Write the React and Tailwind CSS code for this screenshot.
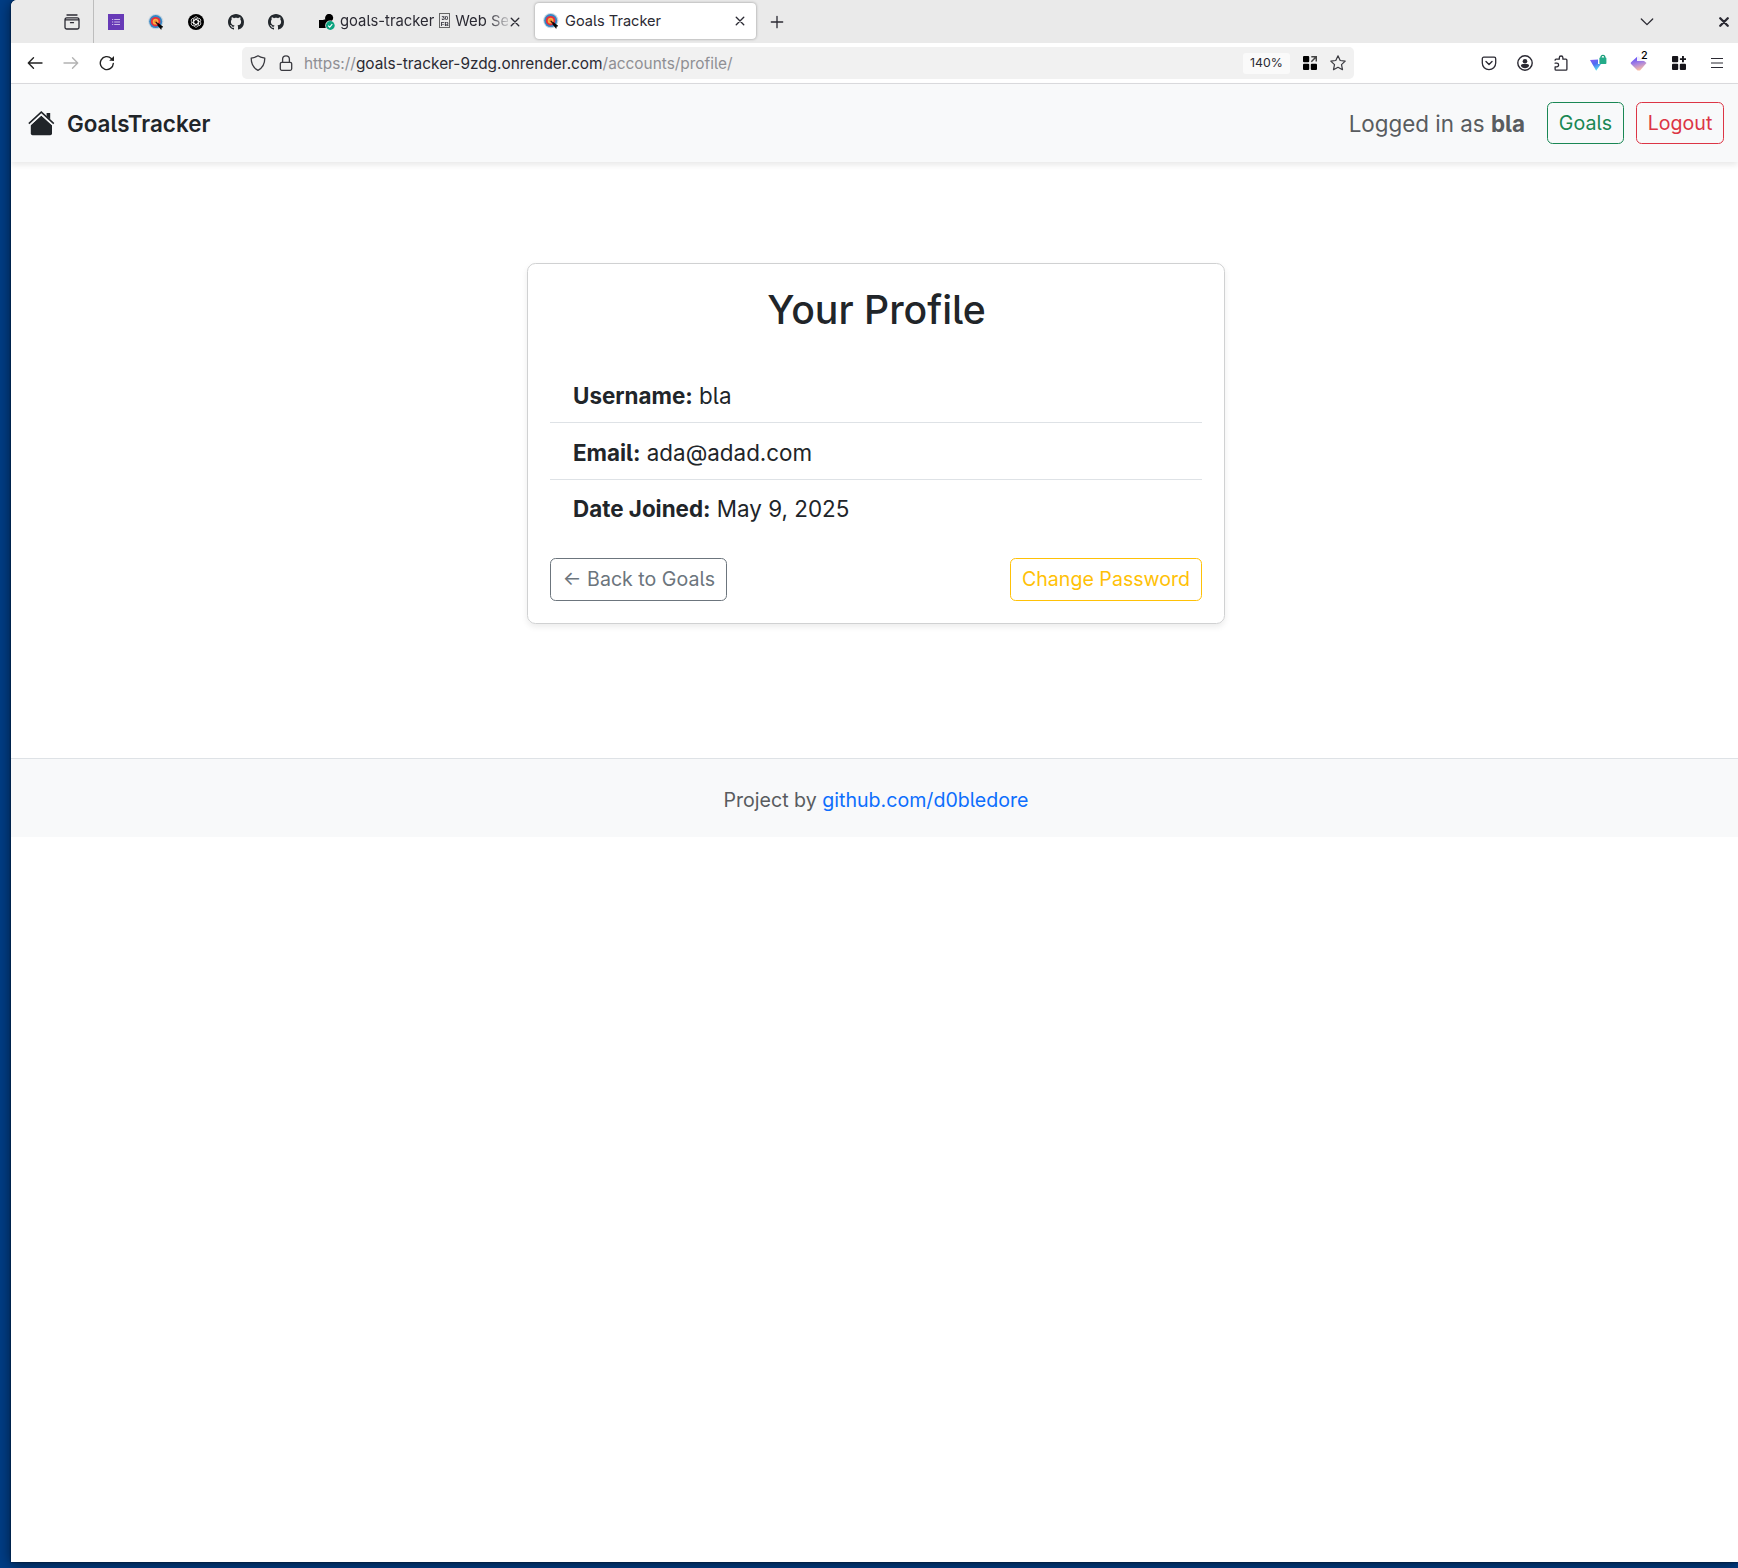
import React from "react";

const Ico = ({ size = 16, children, className = "" }) => (
  <svg width={size} height={size} viewBox="0 0 16 16" fill="none" stroke="currentColor" strokeWidth="1.2" strokeLinecap="round" strokeLinejoin="round" className={"shrink-0 " + className}>
    {children}
  </svg>
);

const GitHub = () => (
  <Ico>
    <path stroke="none" fill="#24292e" d="M8 0C3.58 0 0 3.58 0 8c0 3.54 2.29 6.53 5.47 7.59.4.07.55-.17.55-.38 0-.19-.01-.82-.01-1.49-2.01.37-2.53-.49-2.69-.94-.09-.23-.48-.94-.82-1.13-.28-.15-.68-.52-.01-.53.63-.01 1.08.58 1.23.82.72 1.21 1.87.87 2.33.66.07-.52.28-.87.51-1.07-1.78-.2-3.64-.89-3.64-3.95 0-.87.31-1.59.82-2.15-.08-.2-.36-1.02.08-2.12 0 0 .67-.21 2.2.82.64-.18 1.32-.27 2-.27s1.36.09 2 .27c1.53-1.04 2.2-.82 2.2-.82.44 1.1.16 1.92.08 2.12.51.56.82 1.27.82 2.15 0 3.07-1.87 3.75-3.65 3.95.29.25.54.73.54 1.48 0 1.07-.01 1.93-.01 2.2 0 .21.15.46.55.38A8.01 8.01 0 0 0 16 8c0-4.42-3.58-8-8-8z" />
  </Ico>
);

const Target = () => (
  <Ico>
    <g stroke="none">
      <circle cx="7.8" cy="7.6" r="7.6" fill="#c3d3df" />
      <circle cx="7.7" cy="7.6" r="6.5" fill="#3486c4" />
      <circle cx="7.6" cy="7.7" r="4.8" fill="#e72f3b" />
      <circle cx="7.6" cy="7.7" r="2.9" fill="#fbb040" />
      <circle cx="7.6" cy="7.7" r="1.2" fill="#e8792e" />
    </g>
    <path d="M8.3 8.6 12.4 12.6" stroke="#3a1010" strokeWidth="1.4" />
    <path d="M10.6 9.6l4.4 3.3-1.5.5-.4 2-3.2-3.8z" fill="#050505" stroke="#050505" strokeWidth=".5" />
  </Ico>
);

const OpenAI = () => (
  <Ico>
    <circle cx="8" cy="8" r="8" fill="#000" stroke="none" />
    <g stroke="#fff" strokeWidth=".7">
      {[0, 60, 120, 180, 240, 300].map((a) => (
        <path key={a} transform={`rotate(${a} 8 8)`} d="M5.800 9.200V5a2.200 2.200 0 0 1 4-1.300M7.300 4.900l3.800 2.200" />
      ))}
    </g>
  </Ico>
);

const Cross = ({ w = 1.4 }) => (
  <Ico size={10} className="block"><path d="M2 2l12 12M14 2L2 14" strokeWidth={w * 1.6} /></Ico>
);

const MissingGlyph = () => (
  <span className="mr-[5px] ml-[5px] inline-flex h-[15px] w-[11px] shrink-0 flex-col items-center justify-center border border-[#666] font-['Liberation_Sans',sans-serif] text-[6px] leading-[6px] font-bold">
    <span>30</span><span>FB</span>
  </span>
);

function TabBar() {
  return (
    <div className="flex h-[43px] items-center bg-[#eaeaea] text-[#2b2a33]">
      <div className="flex h-full w-[83px] items-center justify-end border-r border-[#bdbdbd] pr-[13px]">
        <Ico>
          <path d="M1 5.8h14v7.4a1.8 1.8 0 0 1-1.8 1.8H2.8A1.8 1.8 0 0 1 1 13.2zM1 5.8c0-1.2.6-2 1.800-2h10.400c1.200 0 1.800.8 1.800 2M3 1h10M6.500 8.700h3" strokeWidth="1.300" />
        </Ico>
      </div>
      <div className="ml-[14px] flex items-center gap-6">
        <svg width="16" height="16" viewBox="0 0 16 16">
          <path fill="#673ab7" d="M0 0h16v16H0z" />
          <path d="M4 5.500h1.200M4 8h1.200M4 10.500h1.200M6.200 5.500H12M6.200 8H12M6.200 10.500H12" stroke="#cbb9e8" strokeWidth="1.200" />
        </svg>
        <Target /><OpenAI /><GitHub /><GitHub />
      </div>
      <div className="ml-[35px] flex w-[216px] items-center">
        <svg width="16" height="16" viewBox="0 0 16 16" className="shrink-0">
          <path fill="#000" d="M0 6H4.600V5.400H6.300A4.200 4.200 0 0 1 7 1.500A4 4 0 0 1 14.200 3.500C14.300 6 12.500 8 9 8.200L7.500 14H0z" />
          <circle cx="11.200" cy="11.500" r="5" fill="#eaeaea" />
          <circle cx="11.300" cy="11.500" r="4.400" fill="#0aa37f" />
          <path d="M9.200 11.700l1.500 1.500 2.600-3.100" fill="none" stroke="#fff" strokeWidth="1.100" />
        </svg>
        <div className="ml-[5px] flex h-5 w-[168px] -translate-y-px items-center text-[14.800px] leading-5 whitespace-nowrap [mask-image:linear-gradient(to_right,black_148px,transparent_172px)]">
          goals-tracker<MissingGlyph />Web Se
        </div>
        <div className="ml-[2px]"><Cross /></div>
      </div>
      <div className="flex h-[36px] w-[221px] -translate-y-px items-center rounded-[4px] bg-white pr-[11px] pl-2 shadow-[0_0_3px_rgba(0,0,0,0.38)]">
        <Target />
        <span className="ml-[6px] flex-1 text-[14.600px] leading-5">Goals Tracker</span>
        <Cross />
      </div>
      <Ico size={14} className="ml-[14px]"><path d="M8 1.500v13M1.500 8h13" strokeWidth="1.500" /></Ico>
      <div className="flex-1" />
      <Ico size={14}><path d="M1.500 4.500L8 11l6.500-6.500" strokeWidth="1.500" /></Ico>
      <div className="mr-[9px] ml-[65px]"><Cross w={2.300} /></div>
    </div>
  );
}

function Toolbar() {
  return (
    <div className="flex h-[41px] items-center border-b border-[#dcdcdf] bg-white pl-4 text-[#3a3a40]">
      <div className="flex items-center gap-5">
        <Ico className="text-[#222]"><path d="M15 8H1.500M6.500 2.800L1.300 8l5.200 5.200" strokeWidth="1.400" /></Ico>
        <Ico className="text-[#b3b3b3]"><path d="M1 8h13.500M9.500 2.800L14.700 8l-5.200 5.200" strokeWidth="1.400" /></Ico>
        <Ico className="text-[#222]"><path d="M14.300 8.500A6.500 6.500 0 1 1 12.300 3.400l1.900 1.800" strokeWidth="1.400" /><path d="M15 1v4.800h-4.800z" fill="currentColor" stroke="none" /></Ico>
      </div>
      <div className="ml-[127px] flex h-8 w-[1112px] items-center rounded-[5px] bg-[#f1f1f1] pl-2">
        <Ico><path d="M8 .8c2 1.500 4.200 1.900 6.800 2.300 0 5.400-1.800 9.800-6.800 12.200C3 12.900 1.200 8.500 1.200 3.100 3.800 2.700 6 2.300 8 .8z" strokeWidth="1.300" /></Ico>
        <Ico className="ml-3"><rect x="2.300" y="7.300" width="11.400" height="8" rx="1.500" strokeWidth="1.300" /><path d="M4.600 7V4.200a3.400 3.400 0 0 1 6.800 0V7" strokeWidth="1.300" /></Ico>
        <div className="ml-[10px] flex-1 pt-[2px] text-[15.400px] leading-5 whitespace-nowrap text-[#8f8f94]">
          https://<span className="text-[#2b2a33]">goals-tracker-9zdg.onrender.com</span>/accounts/profile/
        </div>
        <div className="flex h-[21px] w-[47px] items-center justify-center rounded-[3px] bg-[#fafafa] pt-px text-[12.300px] text-[#2b2a33]">140%</div>
        <svg width="14" height="14" viewBox="0 0 14 14" className="ml-[13px]">
          <g fill="#000"><rect width="6.200" height="6.200" rx="1" /><rect y="7.800" width="6.200" height="6.200" rx="1" /><rect x="7.800" y="7.800" width="6.200" height="6.200" rx="1" /></g>
          <path d="M8.300 5.700L13 1M8.300.8h5v4.800" fill="none" stroke="#444" strokeWidth="1.500" />
        </svg>
        <Ico className="mr-2 ml-[13px]"><path d="M8 .8l2.200 4.700 5 .6-3.700 3.500 1 5.100L8 12.300l-4.500 2.400 1-5.100L.8 6.100l5-.6z" strokeWidth="1.200" /></Ico>
      </div>
      <div className="ml-[127px] flex items-center text-[#2b2a33]">
        <Ico><path d="M2.800 2.200h10.400c.9 0 1.500.6 1.500 1.500V8a6.700 6.700 0 0 1-13.400 0V3.700c0-.9.600-1.500 1.500-1.500z" strokeWidth="1.300" /><path d="M5 6.500l3 2.900 3-2.900" strokeWidth="1.400" /></Ico>
        <Ico className="ml-5"><circle cx="8" cy="8" r="7.200" strokeWidth="1.400" /><g fill="currentColor" stroke="none"><circle cx="8" cy="6.200" r="2.300" /><path d="M3.900 11c0-1.300.8-2 2-2h4.200c1.200 0 2 .7 2 2C11 12.500 9.600 13.200 8 13.200S5 12.500 3.900 11z" /></g></Ico>
        <Ico className="ml-5"><path d="M1.500 5.200c0-.7.300-1 1-1h3.200V2.800a1.800 1.800 0 0 1 3.600 0v1.400h3c.7 0 1 .3 1 1v9c0 .7-.3 1-1 1H2.500c-.7 0-1-.3-1-1v-2.400h1.700a1.800 1.800 0 0 0 0-3.600H1.500" strokeWidth="1.300" transform="translate(.6 0)" /></Ico>
        <svg width="18" height="18" viewBox="0 0 18 18" className="ml-[20px]">
          <defs><linearGradient id="tri" x1="0" y1="0" x2=".5" y2="1"><stop stopColor="#8a5cf6" /><stop offset=".5" stopColor="#4d6df2" /><stop offset="1" stopColor="#55e0ee" /></linearGradient></defs>
          <path fill="url(#tri)" d="M1 6l8-.6V10h3L7.200 16.800z" />
          <path d="M12 5V3.200a1.900 1.900 0 0 1 3.800 0V5" fill="none" stroke="#179a78" strokeWidth="1.300" />
          <rect x="10.400" y="3.600" width="7" height="6.400" rx=".8" fill="#23ab88" />
        </svg>
        <div className="relative ml-[23px] h-[18px] w-[20px]">
          <svg width="18" height="18" viewBox="0 0 18 18">
            <defs><linearGradient id="dia" x1=".3" y1="0" x2=".6" y2="1"><stop stopColor="#5546ff" /><stop offset=".5" stopColor="#a681e0" /><stop offset="1" stopColor="#ffbfa0" /></linearGradient></defs>
            <path fill="url(#dia)" d="M8 2l8.500 7L10 16.500H7.500L.8 9.800V8.400z" />
          </svg>
          <span className="absolute -top-[4px] left-[7px] bg-white/90 pr-[4px] pl-[4px] text-[10.800px] leading-[11px] font-medium text-black">2</span>
        </div>
        <svg width="14" height="14" viewBox="0 0 14 14" className="ml-[22px]">
          <g fill="#15141a"><rect width="6.200" height="6.200" rx="1" /><rect y="7.800" width="6.200" height="6.200" rx="1" /><rect x="7.800" y="7.800" width="6.200" height="6.200" rx="1" /><path d="M10 0h1.900v2.200H14v1.900h-2.100v2.100H10V4.100H7.900V2.200H10z" /></g>
        </svg>
        <svg width="12" height="16" viewBox="0 0 12 16" className="ml-[25px]"><path d="M0 3.500h12M0 8h12M0 12.500h12" stroke="#2b2a33" strokeWidth="1.200" /></svg>
      </div>
    </div>
  );
}

function Navbar() {
  return (
    <nav className="relative flex h-[78px] items-center bg-[#f8f9fa] pr-[14px] pl-[17px] shadow-[0_3px_6px_rgba(0,0,0,0.09)]">
      <svg width="27" height="26" viewBox="0 0 27 26" fill="#212529" className="translate-y-px">
        <path d="M13.300 4.600L24 14v8.500a1.800 1.800 0 0 1-1.800 1.800H4.600A1.800 1.800 0 0 1 2.800 22.500V14z" />
        <path d="M.8 13.200L13.300 1.700l12.500 11.500" fill="none" stroke="#f8f9fa" strokeWidth="4" />
        <path d="M.8 12.600L13.300 1.100l12.500 11.500" fill="none" stroke="#212529" strokeWidth="1.500" />
        <path d="M18.600 2h3.600v6.600L18.600 5.300z" />
      </svg>
      <span className="ml-3 pt-[2px] text-[22.400px] font-semibold text-[#212529]">GoalsTracker</span>
      <div className="ml-auto flex items-center">
        <span className="mr-[22px] pt-[2px] text-[22.400px] text-[#595c5f]">Logged in as <b className="font-bold">bla</b></span>
        <button className="mr-3 h-[42px] w-[77px] rounded-[5.600px] border border-[#198754] pt-[2px] text-[19.600px] leading-none text-[#198754]">Goals</button>
        <button className="h-[42px] w-[88px] rounded-[5.600px] border border-[#dc3545] pt-[2px] text-[19.600px] leading-none text-[#dc3545]">Logout</button>
      </div>
    </nav>
  );
}

function ProfileCard() {
  return (
    <section className="mt-[101px] ml-[516px] h-[361px] w-[698px] rounded-[8.400px] border border-[#d0d1d2] px-[22px] pt-[22px] text-[#212529] shadow-[0_3px_6px_rgba(0,0,0,0.08)]">
      <h3 className="pl-px text-center text-[39.200px] leading-[47px] font-medium">Your Profile</h3>
      <ul className="mt-[34px] text-[22.400px]">
        <li className="h-[56px] border-b border-[#dee2e6] pt-[12px] pl-[23px] leading-[34px]"><b>Username:</b> bla</li>
        <li className="h-[57px] border-b border-[#dee2e6] pt-[13px] pl-[23px] leading-[34px]"><b>Email:</b> ada@adad.com</li>
        <li className="h-[56px] pt-[12px] pl-[23px] leading-[34px]"><b>Date Joined:</b> May 9, 2025</li>
      </ul>
      <div className="mt-[22px] flex justify-between text-[19.600px] leading-none">
        <button className="h-[43px] w-[177px] rounded-[5.600px] border border-[#6c757d] pt-px pl-px whitespace-nowrap text-[#6c757d]">← Back to Goals</button>
        <button className="h-[43px] w-[192px] rounded-[5.600px] border border-[#ffc107] pt-px whitespace-nowrap text-[#ffc107]">Change Password</button>
      </div>
    </section>
  );
}

export default function App() {
  return (
    <div className="h-[1568px] w-[1738px] overflow-hidden bg-[#003d85] pl-[11px] font-['Inter',sans-serif] [font-feature-settings:'cv05']">
      <div className="h-[1562px] w-[1727px] overflow-hidden rounded-tl-[6px] bg-white shadow-[0_0_2px_rgba(0,0,0,0.8),0_2px_14px_rgba(0,0,0,0.55)]">
        <TabBar />
        <Toolbar />
        <Navbar />
        <ProfileCard />
        <footer className="mt-[134px] flex h-[79px] items-center justify-center border-t border-[#dee2e6] bg-[#f8f9fa] text-[19.600px] text-[#595c5f]">
          <p className="pt-[6px] pl-[3px]">Project by <a className="text-[#0d6efd]">github.com/d0bledore</a></p>
        </footer>
      </div>
    </div>
  );
}
